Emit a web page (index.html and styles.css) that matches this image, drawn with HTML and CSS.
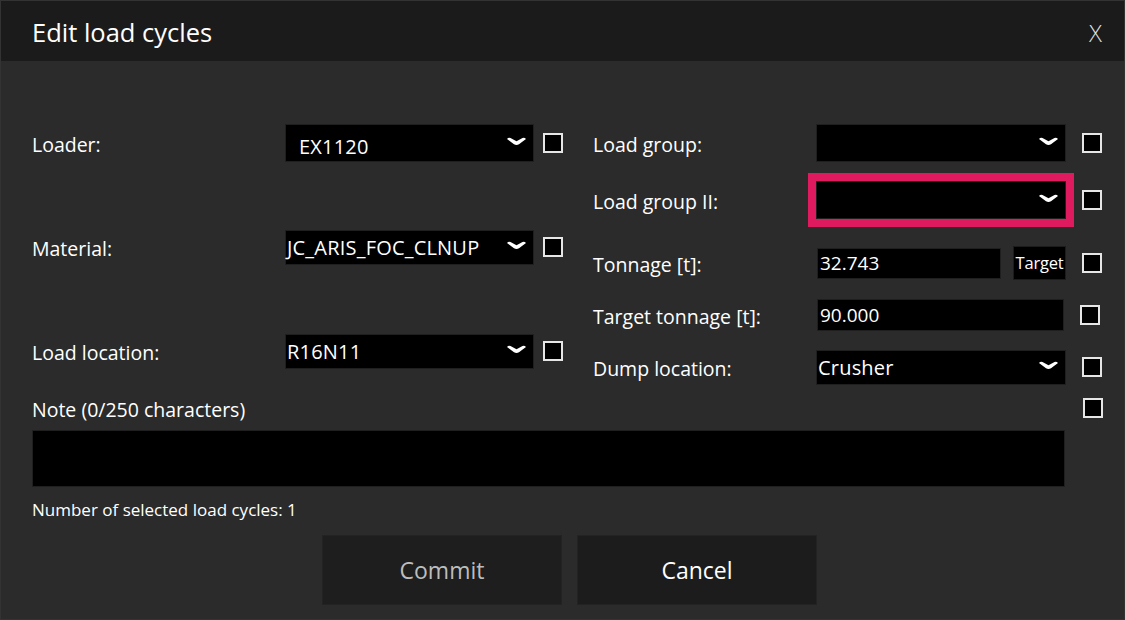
FILE: index.html
```html
<!DOCTYPE html>
<html lang="en">
<head>
<title>Edit load cycles</title>
<meta charset="utf-8">
<link rel="stylesheet" href="styles.css">
</head>
<body>
<div class="window">
	<header class="titlebar">
		<h1>Edit load cycles</h1>
		<span class="close">X</span>
	</header>

	<main class="content">
		<div class="fields">
			<!-- left column -->
			<div class="col col_left">
				<div class="row">
					<label class="lbl">Loader:</label>
					<div class="combo tall indent"><span>EX1120</span>
						<svg class="chev" width="19" height="9" viewBox="0 0 19 9"><path d="M0 2 Q1.5 0 3.5 1 L9.5 4.3 L15.5 1 Q17.5 0 19 2 L12 7.2 Q9.5 8.8 7 7.2 Z" fill="#fff"/></svg>
					</div>
					<span class="check"></span>
				</div>
				<div class="row">
					<label class="lbl">Material:</label>
					<div class="combo"><span>JC_ARIS_FOC_CLNUP</span>
						<svg class="chev" width="19" height="9" viewBox="0 0 19 9"><path d="M0 2 Q1.5 0 3.5 1 L9.5 4.3 L15.5 1 Q17.5 0 19 2 L12 7.2 Q9.5 8.8 7 7.2 Z" fill="#fff"/></svg>
					</div>
					<span class="check"></span>
				</div>
				<div class="row">
					<label class="lbl">Load location:</label>
					<div class="combo"><span>R16N11</span>
						<svg class="chev" width="19" height="9" viewBox="0 0 19 9"><path d="M0 2 Q1.5 0 3.5 1 L9.5 4.3 L15.5 1 Q17.5 0 19 2 L12 7.2 Q9.5 8.8 7 7.2 Z" fill="#fff"/></svg>
					</div>
					<span class="check"></span>
				</div>
			</div>

			<!-- right column -->
			<div class="col col_right">
				<div class="row">
					<label class="lbl">Load group:</label>
					<div class="combo tall"><span></span>
						<svg class="chev" width="19" height="9" viewBox="0 0 19 9"><path d="M0 2 Q1.5 0 3.5 1 L9.5 4.3 L15.5 1 Q17.5 0 19 2 L12 7.2 Q9.5 8.8 7 7.2 Z" fill="#fff"/></svg>
					</div>
					<span class="check"></span>
				</div>
				<div class="row row_second">
					<label class="lbl">Load group II:</label>
					<div class="combo tall invalid"><span></span>
						<svg class="chev" width="19" height="9" viewBox="0 0 19 9"><path d="M0 2 Q1.5 0 3.5 1 L9.5 4.3 L15.5 1 Q17.5 0 19 2 L12 7.2 Q9.5 8.8 7 7.2 Z" fill="#fff"/></svg>
					</div>
					<span class="check"></span>
				</div>
				<div class="row row_third">
					<label class="lbl">Tonnage [t]:</label>
					<div class="pair">
						<div class="textbox short">32.743</div>
						<span class="target">Target</span>
					</div>
					<span class="check"></span>
				</div>
				<div class="row">
					<label class="lbl">Target tonnage [t]:</label>
					<div class="textbox">90.000</div>
					<span class="check"></span>
				</div>
				<div class="row">
					<label class="lbl">Dump location:</label>
					<div class="combo"><span>Crusher</span>
						<svg class="chev" width="19" height="9" viewBox="0 0 19 9"><path d="M0 2 Q1.5 0 3.5 1 L9.5 4.3 L15.5 1 Q17.5 0 19 2 L12 7.2 Q9.5 8.8 7 7.2 Z" fill="#fff"/></svg>
					</div>
					<span class="check"></span>
				</div>
			</div>
		</div>

		<div class="note_row">
			<label class="lbl">Note (0/250 characters)</label>
			<span class="check"></span>
		</div>
		<div class="note"></div>

		<p class="count">Number of selected load cycles: 1</p>

		<div class="actions">
			<button class="btn" disabled>Commit</button>
			<button class="btn">Cancel</button>
		</div>
	</main>
</div>
</body>
</html>
```

FILE: styles.css
```css
body{
	margin: 0;
	background: #2b2b2b;
	font-family: "Open Sans", "Noto Sans", sans-serif;
	color: #fff;
}
.window{
	width: 1125px;
	height: 620px;
	box-sizing: border-box;
	border: 1px solid #333;
	background: #2b2b2b;
}
.titlebar{
	height: 60px;
	background: #1b1b1b;
	display: flex;
	align-items: center;
	justify-content: space-between;
	padding: 0 22px 0 31px;
}
.titlebar h1{
	margin: 0;
	font-size: 25.5px;
	font-weight: 400;
	margin-top: 2px;
}
.close{
	font-size: 24px;
	font-weight: 300;
	color: #ddd;
	margin-top: 2px;
}

.content{ padding: 63px 0 0 31px; }

.fields{ display: flex; }
.col{ display: flex; flex-direction: column; }
.col_left{ gap: 66px; }
.col_right{ gap: 14px; margin-left: 30px; }
.row{
	height: 38px;
	display: flex;
	align-items: center;
}
.row_second{ margin-top: 5px; }
.row_third{ margin-top: 11px; }

.lbl{ font-size: 19.5px; padding-top: 3px; }
.col_left .lbl{ width: 253px; }
.col_right .lbl{ width: 223px; }

.combo{
	box-sizing: border-box;
	height: 35px;
	background: #000;
	border: 1px solid #1f1f1f;
	display: flex;
	align-items: center;
	justify-content: space-between;
	padding: 1px 7px 0 1px;
	font-size: 20px;
	letter-spacing: 0.2px;
}
.col_left .combo{ width: 249px; }
.col_right .combo{ width: 250px; }
.combo.tall{ height: 38px; padding-top: 6px; }
.combo.indent{ padding-left: 13px; }
.combo .chev{ margin-top: -4px; }
.combo.tall .chev{ margin-top: -9px; }
.combo.invalid{ outline: 8px solid #e01a5f; }

.check{
	box-sizing: border-box;
	width: 20px;
	height: 20px;
	border: 2px solid #e6e6e6;
	background: #000;
	margin-left: 9px;
}
.col_right .check{ margin-left: 16px; }

.pair{ display: flex; align-items: center; width: 250px; }
.textbox{
	box-sizing: border-box;
	width: 247px;
	height: 32px;
	margin-left: 1px;
	background: #000;
	border: 1px solid #1f1f1f;
	font-size: 19px;
	line-height: 30px;
	padding-left: 2px;
}
.textbox.short{ width: 184px; height: 31px; line-height: 29px; }
.target{
	box-sizing: border-box;
	width: 53px;
	height: 34px;
	margin-left: 12px;
	background: #000;
	border: 1px solid #1c1c1c;
	font-size: 16.5px;
	line-height: 32px;
	text-align: center;
	letter-spacing: -0.2px;
}

.note_row{
	display: flex;
	align-items: center;
	justify-content: space-between;
	width: 1071px;
	margin-top: 12px;
	height: 20px;
}
.note{
	box-sizing: border-box;
	width: 1033px;
	height: 57px;
	margin-top: 12px;
	background: #000;
	border: 1px solid #1f1f1f;
}
.count{
	margin: 13px 0 0 0;
	font-size: 17px;
	line-height: 20px;
}
.actions{
	display: flex;
	gap: 15px;
	margin: 15px 0 0 290px;
}
.btn{
	width: 240px;
	height: 70px;
	background: #1c1c1c;
	border: 1px solid #232323;
	color: #fff;
	font-family: "Open Sans", "Noto Sans", sans-serif;
	font-size: 23px;
}
.btn:disabled{ color: #bdbdbd; background: #1e1e1e; }
```
